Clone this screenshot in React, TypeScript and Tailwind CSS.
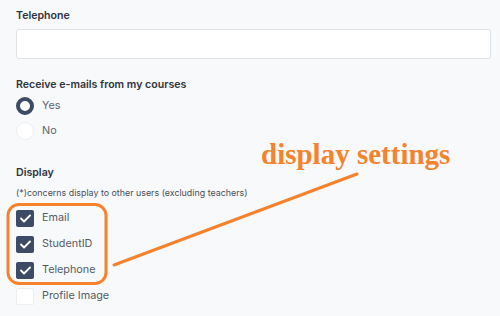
import React from "react";

function Radio({ label, checked }: { label: string; checked?: boolean }) {
    return (
        <div className="flex items-center gap-2 h-[18px]">
            {checked ? (
                <span className="w-[18px] h-[18px] rounded-full border-[4px] border-[#3e4b66] bg-white" />
            ) : (
                <span className="w-[18px] h-[18px] rounded-full border border-[#eceef2] bg-white" />
            )}
            <span className="text-[10.8px] text-[#5f6570]">{label}</span>
        </div>
    );
}

function Check({ label, checked }: { label: string; checked?: boolean }) {
    return (
        <div className="flex items-center gap-2 h-[17px]">
            {checked ? (
                <span className="w-[18px] h-[17px] rounded-[2px] bg-[#3e4b66] flex items-center justify-center">
                    <svg width="11" height="9" viewBox="0 0 11 9" fill="none">
                        <path d="M1 4.5 L4 7.5 L10 1.5" stroke="white" strokeWidth="1.8" strokeLinecap="round" strokeLinejoin="round" />
                    </svg>
                </span>
            ) : (
                <span className="w-[18px] h-[17px] rounded-[2px] border border-[#eceef2] bg-white" />
            )}
            <span className="text-[10.8px] text-[#555b66]">{label}</span>
        </div>
    );
}

export default function App() {
    return (
        <div
            className="relative w-[500px] h-[316px] overflow-hidden bg-[#f8f9fb] px-4"
            style={{ fontFamily: "Inter, 'Noto Sans', sans-serif" }}
        >
            {/* Telephone */}
            <div className="pt-[9px] text-[10.6px] leading-[14px] font-semibold text-[#2f343d]">Telephone</div>
            <div className="mt-[6px] h-[30px] w-[475px] rounded-[3px] border border-[#dfe2e7] bg-white" />

            {/* Receive e-mails */}
            <div className="mt-[19px] text-[10.6px] leading-[14px] font-semibold text-[#2f343d]">
                Receive e-mails from my courses
            </div>
            <div className="mt-[5px] flex flex-col gap-[7px]">
                <Radio label="Yes" checked />
                <Radio label="No" />
            </div>

            {/* Display */}
            <div className="mt-[26px] text-[10.6px] leading-[14px] font-semibold text-[#2f343d]">Display</div>
            <div className="mt-[7px] text-[8.9px] leading-[12px] text-[#4a4f58]">
                (*)concerns display to other users (excluding teachers)
            </div>
            <div className="mt-[11px] flex flex-col gap-[9px]">
                <Check label="Email" checked />
                <Check label="StudentID" checked />
                <Check label="Telephone" checked />
                <Check label="Profile Image" />
            </div>

            {/* annotation */}
            <svg className="absolute left-0 top-0 pointer-events-none" width="500" height="316">
                <rect x="8" y="204.5" width="98" height="79" rx="11" fill="none" stroke="#f5822c" strokeWidth="3" />
                <line x1="114" y1="265" x2="357" y2="174" stroke="#f5822c" strokeWidth="3" strokeLinecap="round" />
            </svg>
            <div
                className="absolute left-[261px] top-[138px] text-[29px] leading-[32px] font-bold text-[#f5822c]"
                style={{ fontFamily: "'Liberation Serif', serif" }}
            >
                display settings
            </div>
        </div>
    );
}
